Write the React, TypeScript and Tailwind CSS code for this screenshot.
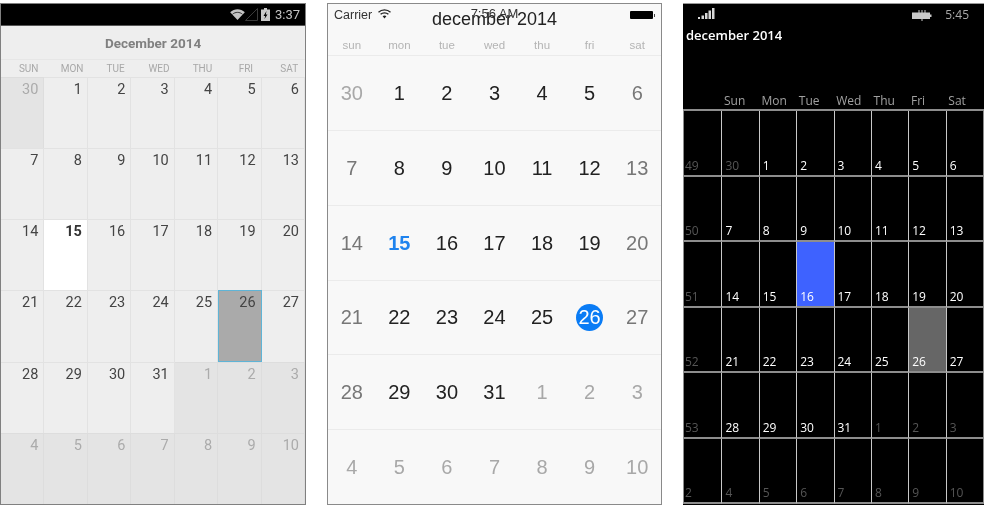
const androidDays = ['SUN', 'MON', 'TUE', 'WED', 'THU', 'FRI', 'SAT'];
const iosDays = ['sun', 'mon', 'tue', 'wed', 'thu', 'fri', 'sat'];
const winDays = ['Sun', 'Mon', 'Tue', 'Wed', 'Thu', 'Fri', 'Sat'];
const weekNumbers = [49, 50, 51, 52, 53, 2];

// 42 days from Nov 30 to Jan 10
const cells = [
  30, 1, 2, 3, 4, 5, 6,
  7, 8, 9, 10, 11, 12, 13,
  14, 15, 16, 17, 18, 19, 20,
  21, 22, 23, 24, 25, 26, 27,
  28, 29, 30, 31, 1, 2, 3,
  4, 5, 6, 7, 8, 9, 10,
];
const isOutside = (i: number) => i === 0 || i >= 32;

function AndroidCalendar() {
  return (
    <div className="w-[306px] h-[502px] shrink-0 flex flex-col border border-[#808080] bg-[#eeeeee] font-['Roboto',sans-serif]">
      <div className="h-[22px] bg-black flex items-center justify-end pr-[5px] border-b border-[#555]">
        <svg width="15" height="11" viewBox="0 0 16 12">
          <path d="M0 3.5C4.5-.8 11.5-.8 16 3.5L8 12Z" fill="#c4c4c4" />
          <path d="M2.6 5.7C5.5 3 10.5 3 13.4 5.7" stroke="#000" strokeWidth="0.8" fill="none" />
        </svg>
        <svg width="13" height="13" viewBox="0 0 13 13">
          <path d="M0.5 12.5L12.5 0.5V12.5Z" fill="none" stroke="#3a3a3a" strokeWidth="1" />
        </svg>
        <svg width="9" height="13" viewBox="0 0 9 13" className="ml-[3px]">
          <path d="M3 0H6V1.5H9V13H0V1.5H3Z" fill="#c8c8c8" />
          <path d="M5.5 3L2.5 8H4.2L3.5 11L6.5 6.5H4.8Z" fill="#000" />
        </svg>
        <span className="text-[13px] leading-none text-[#c4c4c4] ml-[5px]">3:37</span>
      </div>
      <div className="h-[33px] pt-[1px] flex items-center justify-center text-[13.5px] font-bold text-[#808080]">
        December 2014
      </div>
      <div className="h-[18px] grid grid-cols-7 border-t border-[#e6e6e6]">
        {androidDays.map((d) => (
          <div key={d} className="pl-[12px] text-center text-[10px] leading-[18px] text-[#a8a8a8]">
            {d}
          </div>
        ))}
      </div>
      <div className="flex-1 grid grid-cols-7 grid-rows-6">
        {cells.map((n, i) => {
          const outside = isOutside(i);
          const today = i === 15;
          const selected = i === 26;
          let look = 'border-t border-r border-[#e2e2e2] text-[#444444]';
          if (outside) look = 'border-t border-r border-[#dddddd] bg-[#e4e4e4] text-[#ababab]';
          if (today) look = 'border-t border-r border-[#e2e2e2] bg-white font-bold text-[#333333]';
          if (selected) look = 'border border-[#5fb4d6] bg-[#aaaaaa] text-[#444444]';
          return (
            <div key={i} className={`pt-[3px] pr-[5px] text-right text-[14.5px] leading-[18px] ${look}`}>
              {n}
            </div>
          );
        })}
      </div>
    </div>
  );
}

function IosCalendar() {
  return (
    <div className="relative w-[335px] h-[502px] shrink-0 flex flex-col border border-[#8a8a8a] bg-[#f8f8f8] font-['Liberation_Sans',sans-serif]">
      <div className="h-[22px] flex items-center pl-[6px] pr-[6px] text-[12.5px] leading-none text-[#333333]">
        <span>Carrier</span>
        <svg width="13" height="10" viewBox="0 0 13 10" className="ml-[6px] mb-[2px]">
          <path d="M0.5 3.2C3.8 0 9.2 0 12.5 3.2" stroke="#222" strokeWidth="1.3" fill="none" />
          <path d="M2.6 5.3C4.7 3.3 8.3 3.3 10.4 5.3" stroke="#222" strokeWidth="1.3" fill="none" />
          <path d="M4.6 7.3C5.7 6.3 7.3 6.3 8.4 7.3L6.5 9.5Z" fill="#222" />
        </svg>
        <span className="ml-auto w-[23px] h-[8px] rounded-[1px] bg-black" />
        <span className="ml-[1px] w-[1.5px] h-[3px] bg-[#444]" />
      </div>
      {/* the status bar clock sits on top of the title in the source app */}
      <span className="absolute left-0 right-0 top-[3px] text-center text-[13px] leading-[14px] text-[#333333]">
        7:56 AM
      </span>
      <div className="h-[16px] text-center text-[18px] leading-[16px] text-[#222222] mt-[-15px]">
        december 2014
      </div>
      <div className="h-[26px] mt-[2px] grid grid-cols-7 items-center pt-[7px]">
        {iosDays.map((d) => (
          <div key={d} className="text-center text-[11.5px] text-[#b4b4b4]">
            {d}
          </div>
        ))}
      </div>
      <div className="flex-1 grid grid-cols-7 grid-rows-6">
        {cells.map((n, i) => {
          const edge = i % 7 === 0 || i % 7 === 6;
          const today = i === 15;
          const selected = i === 26;
          return (
            <div
              key={i}
              className="border-t border-[#ebebeb] flex items-center justify-center text-[20px]"
            >
              <span
                className={`flex items-center justify-center ${
                  selected
                    ? 'w-[27px] h-[27px] rounded-full bg-[#0a7cf5] text-white'
                    : today
                      ? 'font-bold text-[#1f83ee]'
                      : isOutside(i)
                        ? 'text-[#a8a8a8]'
                        : edge
                          ? 'text-[#777777]'
                          : 'text-[#222222]'
                }`}
              >
                {n}
              </span>
            </div>
          );
        })}
      </div>
    </div>
  );
}

function WindowsCalendar() {
  return (
    <div className="w-[301px] h-[502px] shrink-0 flex flex-col bg-black border-t border-[#999] font-['Open_Sans',sans-serif]">
      <div className="h-[20px] flex items-center pl-[15px] pr-[15px] pt-[2px]">
        <svg width="18" height="12" viewBox="0 0 18 12" fill="#d8d8d8" className="mb-[2px]">
          <rect x="0" y="9" width="2" height="2" />
          <rect x="3.5" y="7.5" width="2.5" height="3.5" />
          <rect x="7" y="5" width="2.5" height="6" />
          <rect x="10.5" y="2.5" width="2.5" height="8.5" />
          <rect x="14" y="0" width="2.5" height="11" />
        </svg>
        <svg width="20" height="11" viewBox="0 0 20 11" fill="#c9c9c9" className="ml-auto">
          <rect x="0" y="2.5" width="18" height="6.5" />
          <rect x="18" y="4.5" width="1.5" height="2.5" />
          <path d="M6.5 0H7.5V3H6.5ZM12.5 0H13.5V3H12.5ZM9.5 0H10.5V11H9.5Z" />
        </svg>
        <span className="ml-[13px] text-[12px] leading-none text-[#a8a8a8]">5:45</span>
      </div>
      <div className="h-[22px] pl-[3px] text-[13px] leading-[22px] font-semibold text-white">december 2014</div>
      <div className="h-[63px] flex items-end pl-[38px]">
        {winDays.map((d) => (
          <div key={d} className="w-[37.4px] pl-[3px] text-[12px] leading-[16px] text-[#a0a0a0]">
            {d}
          </div>
        ))}
      </div>
      <div className="flex-1 mb-[1px] grid grid-cols-8 grid-rows-6 border-x border-t-2 border-[#8d8d8d]">
        {cells.flatMap((n, i) => {
          const day = (
            <div
              key={i}
              className={`border-l border-b-2 border-l-[#c8c8c8] border-b-[#8d8d8d] flex items-end pl-[3px] pb-[1px] text-[12px] leading-[16px] ${
                i === 16 ? 'bg-[#3e62ff]' : ''
              } ${i === 26 ? 'bg-[#666666]' : ''} ${isOutside(i) ? 'text-[#555555]' : 'text-white'}`}
            >
              {n}
            </div>
          );
          if (i % 7 !== 0) return [day];
          return [
            <div
              key={`w${i}`}
              className="border-b-2 border-b-[#8d8d8d] flex items-end pl-[1px] pb-[1px] text-[12px] leading-[16px] text-[#555555]"
            >
              {weekNumbers[i / 7]}
            </div>,
            day,
          ];
        })}
      </div>
    </div>
  );
}

export default function App() {
  return (
    <div className="w-[984px] h-[505px] bg-white flex pt-[3px] overflow-hidden blur-[0.4px]">
      <AndroidCalendar />
      <div className="w-[21px] shrink-0" />
      <IosCalendar />
      <div className="w-[21px] shrink-0" />
      <WindowsCalendar />
    </div>
  );
}
